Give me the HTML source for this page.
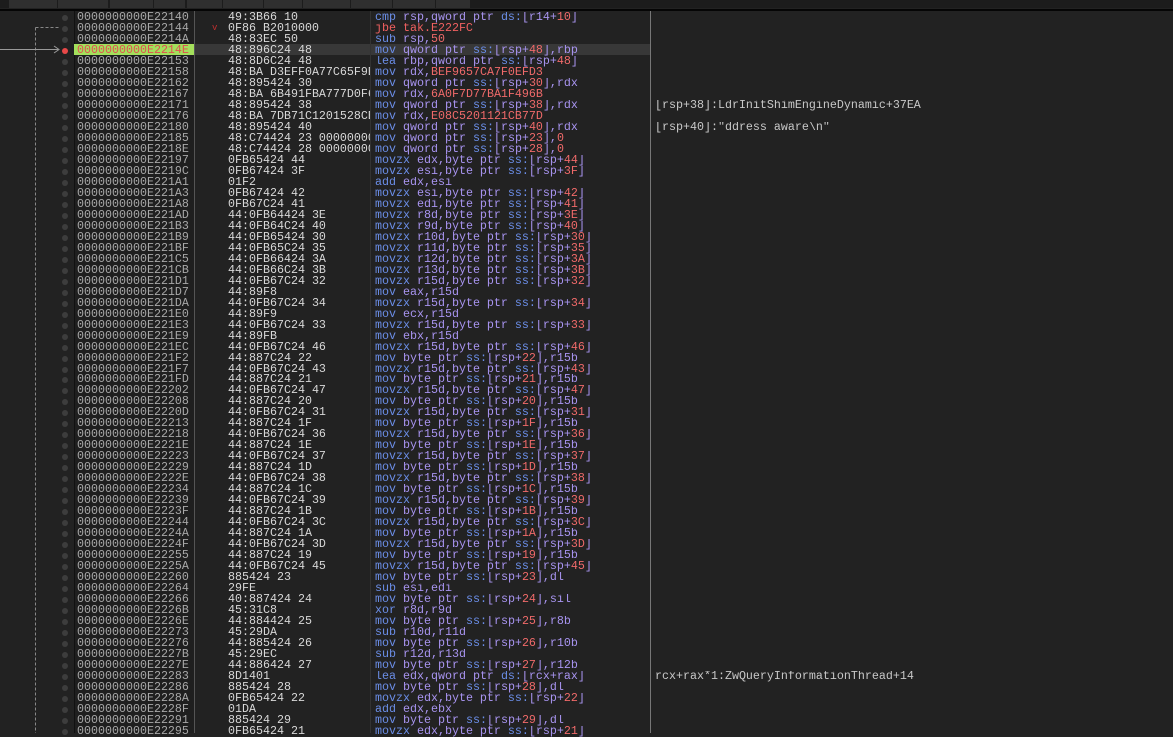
<!DOCTYPE html>
<html><head><meta charset="utf-8"><style>
*{margin:0;padding:0;box-sizing:border-box}
body{width:1173px;height:733px;background:#222;overflow:hidden;position:relative;font-family:"Liberation Mono",monospace;font-size:11.67px;}
#tabs{position:absolute;left:0;top:0;width:1173px;height:8px;background:#1c1c1c}
#tabs div{position:absolute;top:0;height:8px;background:#2f2f2f}
#sep{position:absolute;left:0;top:9px;width:1173px;height:2px;background:#050505}
#addrbg{position:absolute;left:74px;top:11px;width:121px;height:722px;background:#1f1f1f;border-left:1px solid #111}
.vl{position:absolute;top:11px;height:722px;width:1px}
#rows{position:absolute;left:0;top:12px;width:1173px}
.r{position:relative;height:10.985px;line-height:11px;white-space:nowrap}
.r>span{position:absolute;top:0;overflow:hidden}
.d{left:62px;top:3px!important;width:6px;height:6px;border-radius:3px;background:#3d3d3d}
.a{left:77px;color:#a8a8a8}
.b{left:228px;width:142px;color:#d8d8d8}
.i{left:375px;color:#a894f0}
.c{left:655px;color:#c8c8c8}
.m{color:#6b8ee8}.s{color:#6b8ee8}.n{color:#f06a6a}.j{color:#f06060}
</style></head><body>
<div id="tabs">
<div style="left:9px;width:48px"></div><div style="left:58px;width:50px"></div><div style="left:110px;width:43px"></div><div style="left:154px;width:31px"></div><div style="left:187px;width:35px"></div><div style="left:223px;width:40px"></div><div style="left:264px;width:38px"></div><div style="left:303px;width:47px"></div><div style="left:351px;width:41px"></div><div style="left:393px;width:42px"></div><div style="left:436px;width:34px"></div>
</div>
<div id="sep"></div>
<div id="addrbg"></div>
<div style="position:absolute;left:195px;top:44px;width:455px;height:11px;background:#383838"></div>
<div style="position:absolute;left:74px;top:44px;width:121px;height:11px;background:#a4e05c"></div>
<div class="vl" style="left:194px;background:#555"></div>
<div class="vl" style="left:370px;background:#333"></div>
<div class="vl" style="left:650px;background:#777"></div>
<svg style="position:absolute;left:0;top:0" width="75" height="733">
<path d="M35.5 27.5H60M35.5 27.5V733" stroke="#888" stroke-dasharray="3,2" fill="none"/>
<path d="M0 49.5H58" stroke="#999" fill="none"/><path d="M54 46L59 49.5L54 53" stroke="#999" fill="none"/>
</svg>
<div id="rows">
<div class="r"><span class="d"></span><span class="a">0000000000E22140</span><span class="b">49:3B66 10</span><span class="i"><span class="m">cmp</span> rsp,qword ptr <span class="s">ds:</span>[r14+<span class="n">10</span>]</span></div>
<div class="r"><span class="d"></span><span class="a">0000000000E22144</span><span class="b" style="left:212px;width:10px;color:#c03030;font-size:9px">v</span><span class="b">0F86 B2010000</span><span class="i j">jbe tak.E222FC</span></div>
<div class="r"><span class="d"></span><span class="a">0000000000E2214A</span><span class="b">48:83EC 50</span><span class="i"><span class="m">sub</span> rsp,<span class="n">50</span></span></div>
<div class="r"><span class="d" style="background:#e84848"></span><span class="a" style="color:#e05050">0000000000E2214E</span><span class="b">48:896C24 48</span><span class="i"><span class="m">mov</span> qword ptr <span class="s">ss:</span>[rsp+<span class="n">48</span>],rbp</span></div>
<div class="r"><span class="d"></span><span class="a">0000000000E22153</span><span class="b">48:8D6C24 48</span><span class="i"><span class="m">lea</span> rbp,qword ptr <span class="s">ss:</span>[rsp+<span class="n">48</span>]</span></div>
<div class="r"><span class="d"></span><span class="a">0000000000E22158</span><span class="b">48:BA D3EFF0A77C65F9BE</span><span class="i"><span class="m">mov</span> rdx,<span class="n">BEF9657CA7F0EFD3</span></span></div>
<div class="r"><span class="d"></span><span class="a">0000000000E22162</span><span class="b">48:895424 30</span><span class="i"><span class="m">mov</span> qword ptr <span class="s">ss:</span>[rsp+<span class="n">30</span>],rdx</span></div>
<div class="r"><span class="d"></span><span class="a">0000000000E22167</span><span class="b">48:BA 6B491FBA777D0F6A</span><span class="i"><span class="m">mov</span> rdx,<span class="n">6A0F7D77BA1F496B</span></span></div>
<div class="r"><span class="d"></span><span class="a">0000000000E22171</span><span class="b">48:895424 38</span><span class="i"><span class="m">mov</span> qword ptr <span class="s">ss:</span>[rsp+<span class="n">38</span>],rdx</span><span class="c">[rsp+38]:LdrInitShimEngineDynamic+37EA</span></div>
<div class="r"><span class="d"></span><span class="a">0000000000E22176</span><span class="b">48:BA 7DB71C1201528CE0</span><span class="i"><span class="m">mov</span> rdx,<span class="n">E08C5201121CB77D</span></span></div>
<div class="r"><span class="d"></span><span class="a">0000000000E22180</span><span class="b">48:895424 40</span><span class="i"><span class="m">mov</span> qword ptr <span class="s">ss:</span>[rsp+<span class="n">40</span>],rdx</span><span class="c">[rsp+40]:"ddress aware\n"</span></div>
<div class="r"><span class="d"></span><span class="a">0000000000E22185</span><span class="b">48:C74424 23 00000000</span><span class="i"><span class="m">mov</span> qword ptr <span class="s">ss:</span>[rsp+<span class="n">23</span>],<span class="n">0</span></span></div>
<div class="r"><span class="d"></span><span class="a">0000000000E2218E</span><span class="b">48:C74424 28 00000000</span><span class="i"><span class="m">mov</span> qword ptr <span class="s">ss:</span>[rsp+<span class="n">28</span>],<span class="n">0</span></span></div>
<div class="r"><span class="d"></span><span class="a">0000000000E22197</span><span class="b">0FB65424 44</span><span class="i"><span class="m">movzx</span> edx,byte ptr <span class="s">ss:</span>[rsp+<span class="n">44</span>]</span></div>
<div class="r"><span class="d"></span><span class="a">0000000000E2219C</span><span class="b">0FB67424 3F</span><span class="i"><span class="m">movzx</span> esi,byte ptr <span class="s">ss:</span>[rsp+<span class="n">3F</span>]</span></div>
<div class="r"><span class="d"></span><span class="a">0000000000E221A1</span><span class="b">01F2</span><span class="i"><span class="m">add</span> edx,esi</span></div>
<div class="r"><span class="d"></span><span class="a">0000000000E221A3</span><span class="b">0FB67424 42</span><span class="i"><span class="m">movzx</span> esi,byte ptr <span class="s">ss:</span>[rsp+<span class="n">42</span>]</span></div>
<div class="r"><span class="d"></span><span class="a">0000000000E221A8</span><span class="b">0FB67C24 41</span><span class="i"><span class="m">movzx</span> edi,byte ptr <span class="s">ss:</span>[rsp+<span class="n">41</span>]</span></div>
<div class="r"><span class="d"></span><span class="a">0000000000E221AD</span><span class="b">44:0FB64424 3E</span><span class="i"><span class="m">movzx</span> r8d,byte ptr <span class="s">ss:</span>[rsp+<span class="n">3E</span>]</span></div>
<div class="r"><span class="d"></span><span class="a">0000000000E221B3</span><span class="b">44:0FB64C24 40</span><span class="i"><span class="m">movzx</span> r9d,byte ptr <span class="s">ss:</span>[rsp+<span class="n">40</span>]</span></div>
<div class="r"><span class="d"></span><span class="a">0000000000E221B9</span><span class="b">44:0FB65424 30</span><span class="i"><span class="m">movzx</span> r10d,byte ptr <span class="s">ss:</span>[rsp+<span class="n">30</span>]</span></div>
<div class="r"><span class="d"></span><span class="a">0000000000E221BF</span><span class="b">44:0FB65C24 35</span><span class="i"><span class="m">movzx</span> r11d,byte ptr <span class="s">ss:</span>[rsp+<span class="n">35</span>]</span></div>
<div class="r"><span class="d"></span><span class="a">0000000000E221C5</span><span class="b">44:0FB66424 3A</span><span class="i"><span class="m">movzx</span> r12d,byte ptr <span class="s">ss:</span>[rsp+<span class="n">3A</span>]</span></div>
<div class="r"><span class="d"></span><span class="a">0000000000E221CB</span><span class="b">44:0FB66C24 3B</span><span class="i"><span class="m">movzx</span> r13d,byte ptr <span class="s">ss:</span>[rsp+<span class="n">3B</span>]</span></div>
<div class="r"><span class="d"></span><span class="a">0000000000E221D1</span><span class="b">44:0FB67C24 32</span><span class="i"><span class="m">movzx</span> r15d,byte ptr <span class="s">ss:</span>[rsp+<span class="n">32</span>]</span></div>
<div class="r"><span class="d"></span><span class="a">0000000000E221D7</span><span class="b">44:89F8</span><span class="i"><span class="m">mov</span> eax,r15d</span></div>
<div class="r"><span class="d"></span><span class="a">0000000000E221DA</span><span class="b">44:0FB67C24 34</span><span class="i"><span class="m">movzx</span> r15d,byte ptr <span class="s">ss:</span>[rsp+<span class="n">34</span>]</span></div>
<div class="r"><span class="d"></span><span class="a">0000000000E221E0</span><span class="b">44:89F9</span><span class="i"><span class="m">mov</span> ecx,r15d</span></div>
<div class="r"><span class="d"></span><span class="a">0000000000E221E3</span><span class="b">44:0FB67C24 33</span><span class="i"><span class="m">movzx</span> r15d,byte ptr <span class="s">ss:</span>[rsp+<span class="n">33</span>]</span></div>
<div class="r"><span class="d"></span><span class="a">0000000000E221E9</span><span class="b">44:89FB</span><span class="i"><span class="m">mov</span> ebx,r15d</span></div>
<div class="r"><span class="d"></span><span class="a">0000000000E221EC</span><span class="b">44:0FB67C24 46</span><span class="i"><span class="m">movzx</span> r15d,byte ptr <span class="s">ss:</span>[rsp+<span class="n">46</span>]</span></div>
<div class="r"><span class="d"></span><span class="a">0000000000E221F2</span><span class="b">44:887C24 22</span><span class="i"><span class="m">mov</span> byte ptr <span class="s">ss:</span>[rsp+<span class="n">22</span>],r15b</span></div>
<div class="r"><span class="d"></span><span class="a">0000000000E221F7</span><span class="b">44:0FB67C24 43</span><span class="i"><span class="m">movzx</span> r15d,byte ptr <span class="s">ss:</span>[rsp+<span class="n">43</span>]</span></div>
<div class="r"><span class="d"></span><span class="a">0000000000E221FD</span><span class="b">44:887C24 21</span><span class="i"><span class="m">mov</span> byte ptr <span class="s">ss:</span>[rsp+<span class="n">21</span>],r15b</span></div>
<div class="r"><span class="d"></span><span class="a">0000000000E22202</span><span class="b">44:0FB67C24 47</span><span class="i"><span class="m">movzx</span> r15d,byte ptr <span class="s">ss:</span>[rsp+<span class="n">47</span>]</span></div>
<div class="r"><span class="d"></span><span class="a">0000000000E22208</span><span class="b">44:887C24 20</span><span class="i"><span class="m">mov</span> byte ptr <span class="s">ss:</span>[rsp+<span class="n">20</span>],r15b</span></div>
<div class="r"><span class="d"></span><span class="a">0000000000E2220D</span><span class="b">44:0FB67C24 31</span><span class="i"><span class="m">movzx</span> r15d,byte ptr <span class="s">ss:</span>[rsp+<span class="n">31</span>]</span></div>
<div class="r"><span class="d"></span><span class="a">0000000000E22213</span><span class="b">44:887C24 1F</span><span class="i"><span class="m">mov</span> byte ptr <span class="s">ss:</span>[rsp+<span class="n">1F</span>],r15b</span></div>
<div class="r"><span class="d"></span><span class="a">0000000000E22218</span><span class="b">44:0FB67C24 36</span><span class="i"><span class="m">movzx</span> r15d,byte ptr <span class="s">ss:</span>[rsp+<span class="n">36</span>]</span></div>
<div class="r"><span class="d"></span><span class="a">0000000000E2221E</span><span class="b">44:887C24 1E</span><span class="i"><span class="m">mov</span> byte ptr <span class="s">ss:</span>[rsp+<span class="n">1E</span>],r15b</span></div>
<div class="r"><span class="d"></span><span class="a">0000000000E22223</span><span class="b">44:0FB67C24 37</span><span class="i"><span class="m">movzx</span> r15d,byte ptr <span class="s">ss:</span>[rsp+<span class="n">37</span>]</span></div>
<div class="r"><span class="d"></span><span class="a">0000000000E22229</span><span class="b">44:887C24 1D</span><span class="i"><span class="m">mov</span> byte ptr <span class="s">ss:</span>[rsp+<span class="n">1D</span>],r15b</span></div>
<div class="r"><span class="d"></span><span class="a">0000000000E2222E</span><span class="b">44:0FB67C24 38</span><span class="i"><span class="m">movzx</span> r15d,byte ptr <span class="s">ss:</span>[rsp+<span class="n">38</span>]</span></div>
<div class="r"><span class="d"></span><span class="a">0000000000E22234</span><span class="b">44:887C24 1C</span><span class="i"><span class="m">mov</span> byte ptr <span class="s">ss:</span>[rsp+<span class="n">1C</span>],r15b</span></div>
<div class="r"><span class="d"></span><span class="a">0000000000E22239</span><span class="b">44:0FB67C24 39</span><span class="i"><span class="m">movzx</span> r15d,byte ptr <span class="s">ss:</span>[rsp+<span class="n">39</span>]</span></div>
<div class="r"><span class="d"></span><span class="a">0000000000E2223F</span><span class="b">44:887C24 1B</span><span class="i"><span class="m">mov</span> byte ptr <span class="s">ss:</span>[rsp+<span class="n">1B</span>],r15b</span></div>
<div class="r"><span class="d"></span><span class="a">0000000000E22244</span><span class="b">44:0FB67C24 3C</span><span class="i"><span class="m">movzx</span> r15d,byte ptr <span class="s">ss:</span>[rsp+<span class="n">3C</span>]</span></div>
<div class="r"><span class="d"></span><span class="a">0000000000E2224A</span><span class="b">44:887C24 1A</span><span class="i"><span class="m">mov</span> byte ptr <span class="s">ss:</span>[rsp+<span class="n">1A</span>],r15b</span></div>
<div class="r"><span class="d"></span><span class="a">0000000000E2224F</span><span class="b">44:0FB67C24 3D</span><span class="i"><span class="m">movzx</span> r15d,byte ptr <span class="s">ss:</span>[rsp+<span class="n">3D</span>]</span></div>
<div class="r"><span class="d"></span><span class="a">0000000000E22255</span><span class="b">44:887C24 19</span><span class="i"><span class="m">mov</span> byte ptr <span class="s">ss:</span>[rsp+<span class="n">19</span>],r15b</span></div>
<div class="r"><span class="d"></span><span class="a">0000000000E2225A</span><span class="b">44:0FB67C24 45</span><span class="i"><span class="m">movzx</span> r15d,byte ptr <span class="s">ss:</span>[rsp+<span class="n">45</span>]</span></div>
<div class="r"><span class="d"></span><span class="a">0000000000E22260</span><span class="b">885424 23</span><span class="i"><span class="m">mov</span> byte ptr <span class="s">ss:</span>[rsp+<span class="n">23</span>],dl</span></div>
<div class="r"><span class="d"></span><span class="a">0000000000E22264</span><span class="b">29FE</span><span class="i"><span class="m">sub</span> esi,edi</span></div>
<div class="r"><span class="d"></span><span class="a">0000000000E22266</span><span class="b">40:887424 24</span><span class="i"><span class="m">mov</span> byte ptr <span class="s">ss:</span>[rsp+<span class="n">24</span>],sil</span></div>
<div class="r"><span class="d"></span><span class="a">0000000000E2226B</span><span class="b">45:31C8</span><span class="i"><span class="m">xor</span> r8d,r9d</span></div>
<div class="r"><span class="d"></span><span class="a">0000000000E2226E</span><span class="b">44:884424 25</span><span class="i"><span class="m">mov</span> byte ptr <span class="s">ss:</span>[rsp+<span class="n">25</span>],r8b</span></div>
<div class="r"><span class="d"></span><span class="a">0000000000E22273</span><span class="b">45:29DA</span><span class="i"><span class="m">sub</span> r10d,r11d</span></div>
<div class="r"><span class="d"></span><span class="a">0000000000E22276</span><span class="b">44:885424 26</span><span class="i"><span class="m">mov</span> byte ptr <span class="s">ss:</span>[rsp+<span class="n">26</span>],r10b</span></div>
<div class="r"><span class="d"></span><span class="a">0000000000E2227B</span><span class="b">45:29EC</span><span class="i"><span class="m">sub</span> r12d,r13d</span></div>
<div class="r"><span class="d"></span><span class="a">0000000000E2227E</span><span class="b">44:886424 27</span><span class="i"><span class="m">mov</span> byte ptr <span class="s">ss:</span>[rsp+<span class="n">27</span>],r12b</span></div>
<div class="r"><span class="d"></span><span class="a">0000000000E22283</span><span class="b">8D1401</span><span class="i"><span class="m">lea</span> edx,qword ptr <span class="s">ds:</span>[rcx+rax]</span><span class="c">rcx+rax*1:ZwQueryInformationThread+14</span></div>
<div class="r"><span class="d"></span><span class="a">0000000000E22286</span><span class="b">885424 28</span><span class="i"><span class="m">mov</span> byte ptr <span class="s">ss:</span>[rsp+<span class="n">28</span>],dl</span></div>
<div class="r"><span class="d"></span><span class="a">0000000000E2228A</span><span class="b">0FB65424 22</span><span class="i"><span class="m">movzx</span> edx,byte ptr <span class="s">ss:</span>[rsp+<span class="n">22</span>]</span></div>
<div class="r"><span class="d"></span><span class="a">0000000000E2228F</span><span class="b">01DA</span><span class="i"><span class="m">add</span> edx,ebx</span></div>
<div class="r"><span class="d"></span><span class="a">0000000000E22291</span><span class="b">885424 29</span><span class="i"><span class="m">mov</span> byte ptr <span class="s">ss:</span>[rsp+<span class="n">29</span>],dl</span></div>
<div class="r"><span class="d"></span><span class="a">0000000000E22295</span><span class="b">0FB65424 21</span><span class="i"><span class="m">movzx</span> edx,byte ptr <span class="s">ss:</span>[rsp+<span class="n">21</span>]</span></div>
</div>
</body></html>
